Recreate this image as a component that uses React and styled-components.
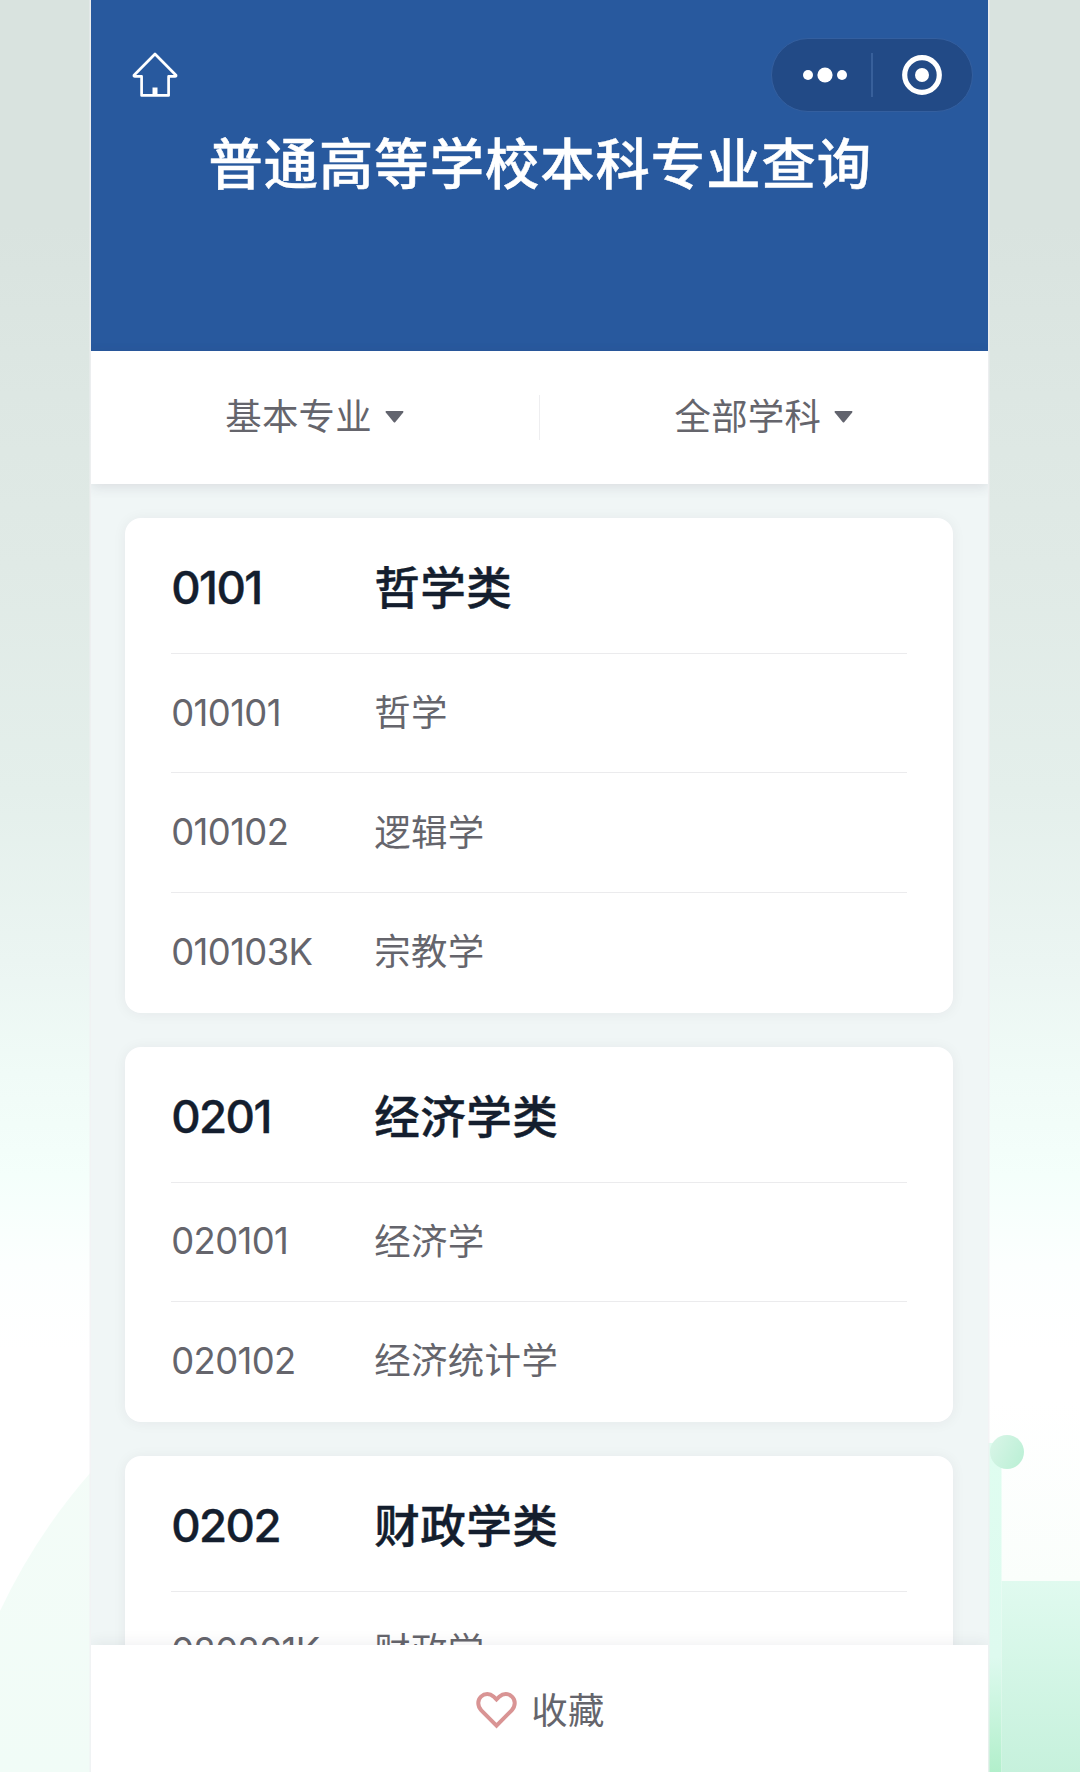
import React, { useState } from 'react';
import styled, { createGlobalStyle } from 'styled-components';

const GlobalStyle = createGlobalStyle`
  * {
    box-sizing: border-box;
  }

  body {
    margin: 0;
    font-family: 'Inter', 'Noto Sans CJK SC', sans-serif;
    color: #65656c;
  }
`;

const Page = styled.div`
  position: relative;
  display: flex;
  justify-content: center;
  width: 1080px;
  height: 1772px;
  overflow: hidden;
  background: linear-gradient(
    180deg,
    #d9e3df 0,
    #d9e3df 226px,
    #dde7e3 395px,
    #e0eae6 565px,
    #e4efeb 790px,
    #ebf5f2 960px,
    #f0fbf7 1073px,
    #f4fffb 1175px,
    #fcfffe 1265px,
    #ffffff 1350px
  );
`;

const Scenery = styled.svg`
  position: absolute;
  top: 0;
  left: 0;
`;

const Phone = styled.main`
  position: relative;
  display: flex;
  flex-direction: column;
  width: 897px;
  height: 100%;
  margin-right: 1.5px;
  overflow: hidden;
  background: #f0f6f6;
  box-shadow: 0 0 0 1.5px rgba(240, 240, 242, 0.8);
`;

const Header = styled.header`
  height: 350.7px;
  padding-top: 37.5px;
  background: #28599e;
`;

const NavBar = styled.div`
  display: flex;
  align-items: center;
  justify-content: space-between;
  height: 74px;
  padding: 0 15px 0 41px;
`;

const IconButton = styled.button`
  display: flex;
  padding: 0;
  border: none;
  background: none;
  cursor: pointer;
`;

const Capsule = styled.div`
  display: flex;
  align-items: center;
  width: 201.5px;
  height: 74px;
  border: 1.5px solid #345f9f;
  border-radius: 37px;
  background: #224a86;
`;

const CapsuleButton = styled(IconButton)`
  flex: 0 1 50%;
  justify-content: center;
  padding-left: ${props => (props.$inset ? '6px' : '0')};
`;

const CapsuleDivider = styled.span`
  width: 1.5px;
  height: 44px;
  background: #38609b;
`;

const Title = styled.h1`
  margin: 12px 0 0;
  font-size: 54.3px;
  line-height: 80px;
  font-weight: 500;
  letter-spacing: 1px;
  text-indent: 2px;
  text-align: center;
  color: #fff;
  -webkit-text-stroke: 0.5px #fff;
`;

const Filters = styled.div`
  position: relative;
  z-index: 1;
  display: flex;
  align-items: center;
  height: 133.3px;
  background: #fff;
  box-shadow: 0 3px 12px rgba(60, 50, 70, 0.12);
`;

const Filter = styled.button`
  flex: 1;
  display: flex;
  align-items: center;
  justify-content: center;
  gap: 13px;
  padding: 0;
  border: none;
  background: none;
  font-family: inherit;
  font-size: 36.4px;
  line-height: 54px;
  letter-spacing: 0.3px;
  color: inherit;
  cursor: pointer;
`;

const FilterDivider = styled.span`
  width: 1.5px;
  height: 45px;
  background: #eeeef0;
`;

const List = styled.div`
  flex: 1;
  min-height: 0;
  display: flex;
  flex-direction: column;
  gap: 34.4px;
  padding: 34.5px 34.5px 0;
  overflow: hidden;
`;

const Card = styled.section`
  flex: none;
  padding: 0 46px 1.3px;
  border-radius: 16px;
  background: #fff;
  box-shadow: 0 1px 14px rgba(50, 40, 50, 0.06);
`;

const Row = styled.div`
  display: flex;
  align-items: center;
  height: ${props => (props.$heading ? '134.5px' : '119.5px')};
  font-size: ${props => (props.$heading ? '45.6px' : '36.4px')};
  font-weight: ${props => (props.$heading ? 500 : 400)};
  color: ${props => (props.$heading ? '#141e2e' : 'inherit')};
  -webkit-text-stroke: ${props => (props.$heading ? '0.4px #141e2e' : '0')};

  & + & {
    border-top: 1.5px solid #ebebed;
  }
`;

const Code = styled.span`
  width: 203px;
  padding: ${props => (props.$heading ? '4px 0 0' : '0 0 1px')};
  letter-spacing: ${props => (props.$heading ? '-1.6px' : '-0.6px')};
`;

const Name = styled.span`
  padding-bottom: ${props => (props.$heading ? '1px' : '6px')};
  letter-spacing: 0.4px;
`;

const Footer = styled.footer`
  position: relative;
  display: flex;
  align-items: center;
  justify-content: center;
  height: 127px;
  padding: 4px 0 0 2px;
  background: #fff;
  box-shadow: 0 -2px 14px rgba(40, 40, 60, 0.07);
`;

const FavoriteButton = styled(IconButton)`
  align-items: center;
  gap: 14.5px;
  font-family: inherit;
  font-size: 36.4px;
  line-height: 54px;
  letter-spacing: 0.3px;
  color: inherit;
`;

const categories = [
  {
    code: '0101',
    name: '哲学类',
    majors: [
      ['010101', '哲学'],
      ['010102', '逻辑学'],
      ['010103K', '宗教学'],
    ],
  },
  {
    code: '0201',
    name: '经济学类',
    majors: [
      ['020101', '经济学'],
      ['020102', '经济统计学'],
    ],
  },
  {
    code: '0202',
    name: '财政学类',
    majors: [['020201K', '财政学']],
  },
];

const HomeIcon = () => (
  <svg width="46" height="46" viewBox="0 0 46 46" fill="none" stroke="#fff" strokeWidth="2.7" strokeLinejoin="round">
    <path d="M23 2 L44 23.2 Q44.4 24.4 43 24.4 H36.6 V43.4 H9.6 V24.4 H3 Q1.6 24.4 2 23.2 Z" />
    <path d="M23 35.5 V43" strokeWidth="5" />
  </svg>
);

const MoreIcon = () => (
  <svg width="44" height="16" viewBox="0 0 44 16" fill="#fff">
    <circle cx="5" cy="8" r="5" />
    <circle cx="22" cy="8" r="7.6" />
    <circle cx="39" cy="8" r="5" />
  </svg>
);

const TargetIcon = () => (
  <svg width="40" height="40" viewBox="0 0 40 40">
    <circle cx="20" cy="20" r="17.3" fill="none" stroke="#fff" strokeWidth="5.2" />
    <circle cx="20" cy="20" r="7" fill="#fff" />
  </svg>
);

const Caret = () => (
  <svg width="19" height="12" viewBox="0 0 19 12" fill="#62646e">
    <path d="M1.2 0 H17.8 Q19 0.3 18.2 1.6 L10.4 11 Q9.5 12 8.6 11 L0.8 1.6 Q0 0.3 1.2 0 Z" />
  </svg>
);

const HeartIcon = ({ filled }) => (
  <svg width="41" height="37" viewBox="0 0 41 37" fill={filled ? '#d99494' : 'none'} stroke="#d99494" strokeWidth="4">
    <path d="M20.5 33.6 L5.3 18.3 C1.2 14 1.4 8 5 4.6 C8.6 1.2 14 1.4 17.4 4.4 L20.5 7.4 L23.6 4.4 C27 1.4 32.4 1.2 36 4.6 C39.6 8 39.8 14 35.7 18.3 Z" />
  </svg>
);

const Backdrop = () => (
  <Scenery width="1080" height="1772" viewBox="0 0 1080 1772">
    <defs>
      <linearGradient id="hill" x1="0" y1="1270" x2="0" y2="1772" gradientUnits="userSpaceOnUse">
        <stop offset="0" stopColor="#f5fcf8" />
        <stop offset="1" stopColor="#f1fcf7" />
      </linearGradient>
      <linearGradient id="pole" x1="0" y1="0" x2="0" y2="1">
        <stop offset="0" stopColor="#dffdf0" />
        <stop offset="0.65" stopColor="#defaef" />
        <stop offset="1" stopColor="#b2efcb" />
      </linearGradient>
      <linearGradient id="block" x1="0" y1="0" x2="0" y2="1">
        <stop offset="0" stopColor="#e0faef" />
        <stop offset="1" stopColor="#c6f1dc" />
      </linearGradient>
      <linearGradient id="ball" x1="0" y1="0.2" x2="1" y2="0.7">
        <stop offset="0" stopColor="#d8f5e7" />
        <stop offset="1" stopColor="#bcf0d6" />
      </linearGradient>
      <linearGradient id="haze" x1="0" y1="0" x2="0" y2="1">
        <stop offset="0" stopColor="#fafefc" stopOpacity="0" />
        <stop offset="1" stopColor="#fafefb" />
      </linearGradient>
    </defs>
    <path d="M0 1611 A598 598 0 0 1 91 1472 V1772 H0 Z" fill="url(#hill)" />
    <rect x="988" y="1400" width="92" height="181" fill="url(#haze)" />
    <rect x="988" y="1443" width="13.5" height="329" fill="url(#pole)" />
    <rect x="1001.5" y="1581" width="78.5" height="191" fill="url(#block)" />
    <circle cx="1007" cy="1452" r="17" fill="url(#ball)" />
  </Scenery>
);

const App = () => {
  const [favorite, setFavorite] = useState(false);

  return (
    <>
      <GlobalStyle />
      <Page>
        <Backdrop />
        <Phone>
          <Header>
            <NavBar>
              <IconButton>
                <HomeIcon />
              </IconButton>
              <Capsule>
                <CapsuleButton $inset>
                  <MoreIcon />
                </CapsuleButton>
                <CapsuleDivider />
                <CapsuleButton>
                  <TargetIcon />
                </CapsuleButton>
              </Capsule>
            </NavBar>
            <Title>普通高等学校本科专业查询</Title>
          </Header>

          <Filters>
            <Filter>
              基本专业
              <Caret />
            </Filter>
            <FilterDivider />
            <Filter>
              全部学科
              <Caret />
            </Filter>
          </Filters>

          <List>
            {categories.map(category => (
              <Card key={category.code}>
                <Row $heading>
                  <Code $heading>{category.code}</Code>
                  <Name $heading>{category.name}</Name>
                </Row>
                {category.majors.map(([code, name]) => (
                  <Row key={code}>
                    <Code>{code}</Code>
                    <Name>{name}</Name>
                  </Row>
                ))}
              </Card>
            ))}
          </List>

          <Footer>
            <FavoriteButton onClick={() => setFavorite(!favorite)}>
              <HeartIcon filled={favorite} />
              收藏
            </FavoriteButton>
          </Footer>
        </Phone>
      </Page>
    </>
  );
};

export default App;
